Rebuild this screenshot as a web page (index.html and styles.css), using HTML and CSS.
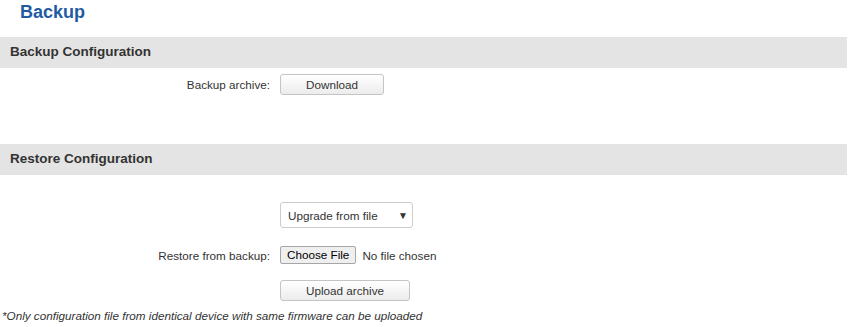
FILE: index.html
```html
<!DOCTYPE html>
<html lang="en">
<head>
  <meta charset="UTF-8">
  <title>Backup</title>
  <link rel="stylesheet" href="styles.css">
</head>
<body>
  <h2 class="page-title">Backup</h2>

  <!-- Backup section -->
  <div class="section">
    <h3 class="section-title">Backup Configuration</h3>
    <div class="row first-row">
      <label class="row-label">Backup archive:</label>
      <div class="row-field"><button class="btn btn-download" type="button">Download</button></div>
    </div>
  </div>

  <!-- Restore section -->
  <div class="section restore">
    <h3 class="section-title">Restore Configuration</h3>
    <div class="row select-row">
      <label class="row-label"></label>
      <div class="row-field">
        <div class="select-box">
          <span>Upgrade from file</span>
          <span class="arrow">&#9660;</span>
        </div>
      </div>
    </div>
    <div class="row file-row">
      <label class="row-label">Restore from backup:</label>
      <div class="row-field">
        <span class="file-btn">Choose File</span>
        <span class="file-name">No file chosen</span>
      </div>
    </div>
    <div class="row upload-row">
      <label class="row-label"></label>
      <div class="row-field"><button class="btn btn-upload" type="button">Upload archive</button></div>
    </div>
    <p class="note">*Only configuration file from identical device with same firmware can be uploaded</p>
  </div>
</body>
</html>
```

FILE: styles.css
```css
body {
  margin: 0;
  font-family: "Liberation Sans", Arial, sans-serif;
  font-size: 11.7px;
  color: #333;
  background: #fff;
}
.page-title {
  margin: 0;
  padding: 1px 0 0 20px;
  height: 37px;
  box-sizing: border-box;
  font-size: 18px;
  line-height: 22px;
  color: #1f5ba3;
}
.section-title {
  margin: 0 2px 0 0;
  height: 31px;
  padding-left: 10px;
  background: #e4e4e4;
  font-size: 13.5px;
  line-height: 29px;
  color: #333;
}
.row {
  display: grid;
  grid-template-columns: 270px 1fr;
  column-gap: 10px;
  align-items: center;
}
.row-label {
  text-align: right;
}
.first-row {
  margin-top: 6px;
}
.restore {
  margin-top: 49px;
}
.select-row {
  margin-top: 27px;
}
.file-row {
  margin-top: 18px;
}
.upload-row {
  margin-top: 16px;
}
.btn {
  font-family: "Liberation Sans", Arial, sans-serif;
  font-size: 11.7px;
  color: #333;
  height: 21px;
  padding: 0;
  border: 1px solid #c4c4c4;
  border-radius: 3px;
  background: linear-gradient(#ffffff, #ececec);
  cursor: pointer;
}
.btn-download {
  width: 104px;
}
.btn-upload {
  width: 130px;
}
.select-box {
  width: 133px;
  height: 26px;
  box-sizing: border-box;
  border: 1px solid #ccc;
  border-radius: 3px;
  display: flex;
  align-items: center;
  justify-content: space-between;
  padding: 0 4px 0 7px;
  color: #333;
}
.arrow {
  font-size: 10px;
  color: #333;
}
.file-row .row-field {
  display: flex;
  align-items: center;
  gap: 6px;
}
.file-btn {
  display: inline-block;
  height: 18px;
  line-height: 16px;
  box-sizing: border-box;
  padding: 0 6px;
  border: 1px solid #a6a6a6;
  border-radius: 2px;
  background: #efefef;
  color: #000;
}
.note {
  margin: 8px 0 0 2px;
  font-style: italic;
  color: #333;
}
```
